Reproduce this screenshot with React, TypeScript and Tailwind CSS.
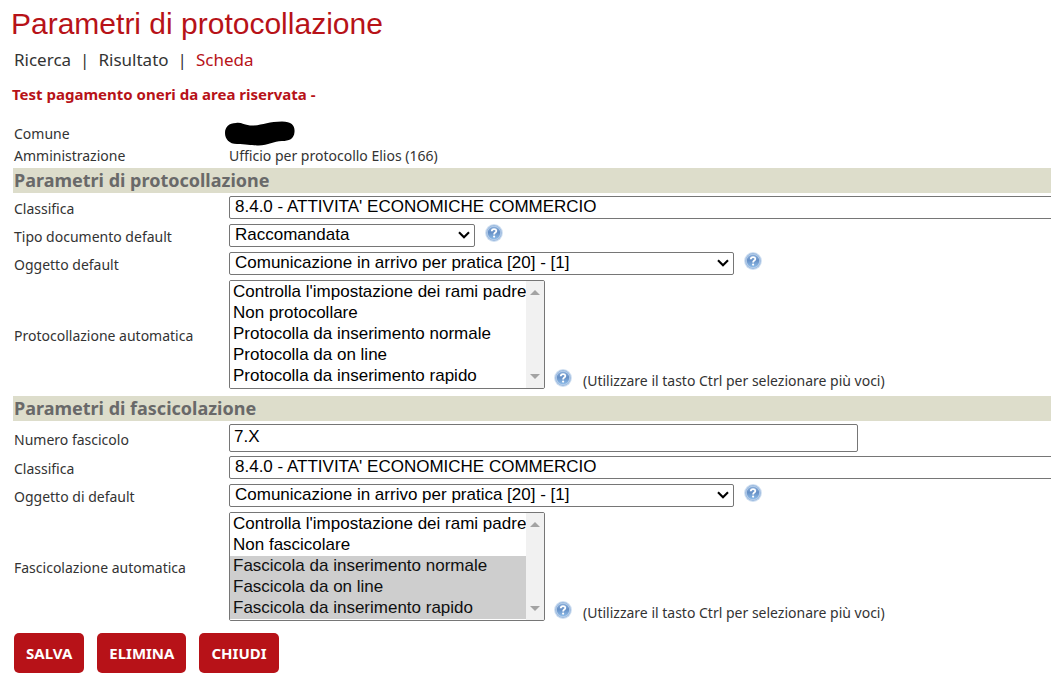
import { useId, type ReactNode } from 'react';

const controlFont = "font-['Liberation_Sans',Arial,sans-serif] text-[17px] text-black";

function Chevron() {
  return (
    <svg
      aria-hidden="true"
      viewBox="0 0 12 8"
      className="pointer-events-none col-start-1 row-start-1 mr-[5px] h-2 w-3 self-center justify-self-end"
    >
      <path d="M1 1.3 L6 6.3 L11 1.3" fill="none" stroke="#000" strokeWidth="2.1" />
    </svg>
  );
}

function HelpIcon() {
  const id = useId();
  return (
    <svg aria-hidden="true" viewBox="0 0 18 18" className="h-[18px] w-[18px]">
      <defs>
        <linearGradient id={id} x1="0" y1="0" x2="0" y2="1">
          <stop offset="0" stopColor="#86abd8" />
          <stop offset="0.45" stopColor="#6690c6" />
          <stop offset="1" stopColor="#8dbbe8" />
        </linearGradient>
      </defs>
      <circle cx="9" cy="9" r="8.9" fill="#cfdff1" />
      <circle cx="9" cy="9" r="7.9" fill="#9dbbe0" />
      <circle cx="9" cy="9" r="6.9" fill="#b9d0ea" />
      <circle cx="9" cy="9" r="6.2" fill={`url(#${id})`} />
      <path
        d="M6.8 7.2 C6.8 4.4 11.3 4.4 11.3 7 C11.3 8.6 9.1 8.6 9.1 10.4"
        fill="none"
        stroke="#fff"
        strokeWidth="1.8"
      />
      <circle cx="9.1" cy="12.6" r="1.1" fill="#fff" />
    </svg>
  );
}

function HelpButton() {
  return (
    <button type="button" aria-label="Aiuto" className="shrink-0 cursor-pointer">
      <HelpIcon />
    </button>
  );
}

function Row({ label, htmlFor, className, children }: {
  label: string;
  htmlFor?: string;
  className: string;
  children: ReactNode;
}) {
  return (
    <div className={`grid grid-cols-[216px_1fr] items-center ${className}`}>
      {htmlFor ? (
        <label htmlFor={htmlFor} className="pt-[3px] pl-px">{label}</label>
      ) : (
        <span className="pl-px">{label}</span>
      )}
      <div className="flex min-w-0">{children}</div>
    </div>
  );
}

function Dropdown({ id, value, width, help = true }: {
  id: string;
  value: string;
  width: string;
  help?: boolean;
}) {
  return (
    <div className="flex items-start gap-[10px]">
      <div className={`grid items-center ${width}`}>
        <select
          id={id}
          className={`col-start-1 row-start-1 h-[23px] w-full appearance-none rounded-[2px] border border-[#767676] bg-white pr-6 pb-px pl-[5px] leading-5 ${controlFont}`}
        >
          <option>{value}</option>
        </select>
        <Chevron />
      </div>
      {help && <HelpButton />}
    </div>
  );
}

function ListBox({ id, options, selected = [] }: {
  id: string;
  options: string[];
  selected?: string[];
}) {
  return (
    <div className="flex items-end">
      <div className="flex h-[109px] w-[316px] overflow-hidden rounded-[2px] border border-[#767676]">
        <select
          id={id}
          multiple
          size={5}
          defaultValue={selected}
          className={`min-w-0 flex-1 overflow-hidden bg-white pt-px ${controlFont}`}
        >
          {options.map((option) => (
            <option key={option} value={option} className="h-[21px] min-h-0 px-[3px] py-0 leading-5">
              {option}
            </option>
          ))}
        </select>
        <div aria-hidden="true" className="flex w-[18px] flex-col items-center justify-between bg-[#f1f1f1] py-[9px]">
          <svg viewBox="0 0 10 5" className="h-[5px] w-[10px]"><path d="M0 5 L5 0 L10 5Z" fill="#a3a3a3" /></svg>
          <svg viewBox="0 0 10 5" className="h-[5px] w-[10px]"><path d="M0 0 L5 5 L10 0Z" fill="#a3a3a3" /></svg>
        </div>
      </div>
      <div className="flex h-5 items-start gap-[11px] pl-[9px]">
        <HelpButton />
        <span className="leading-6">(Utilizzare il tasto Ctrl per selezionare più voci)</span>
      </div>
    </div>
  );
}

function SectionTitle({ children }: { children: ReactNode }) {
  return (
    <h2 className="h-[25px] bg-[#ddddcb] pl-px text-[18px] leading-[25px] font-bold text-[#696969]">
      {children}
    </h2>
  );
}

function ActionButton({ children }: { children: ReactNode }) {
  return (
    <button
      type="button"
      className="h-10 cursor-pointer rounded-[5px] bg-[#b71218] px-3 text-[15px] font-bold text-white"
    >
      {children}
    </button>
  );
}

export default function App() {
  return (
    <main className="min-h-screen overflow-hidden bg-white pl-[13px] font-['Noto_Sans',Tahoma,sans-serif] text-[14px] leading-5 text-[#333]">
      <h1 className="-ml-[2px] pt-1 font-['Liberation_Sans',Arial,sans-serif] text-[30px] leading-10 text-[#b71218]">
        Parametri di protocollazione
      </h1>
      <nav className="mt-1 flex gap-[9px] pl-px text-[17px] leading-6">
        <a href="#ricerca">Ricerca</a>
        <span aria-hidden="true">|</span>
        <a href="#risultato">Risultato</a>
        <span aria-hidden="true">|</span>
        <a href="#scheda" aria-current="page" className="text-[#b71218]">Scheda</a>
      </nav>
      <p className="-ml-px mt-3 text-[15px] leading-5 font-bold text-[#b71218]">
        Test pagamento oneri da area riservata -
      </p>

      <form className="mt-[17px]" onSubmit={(event) => event.preventDefault()}>
        <Row label="Comune" className="h-[23px]">
          <svg aria-hidden="true" viewBox="0 0 72 26" className="-ml-1 h-[26px] w-[72px]">
            <path
              d="M11 2 C16 1 19 4 25 4.500 C36 5 43 .5 57 .5 C67 .5 70 5 69.500 11 C69 18 64 20 57 20 C48 20 43 25 32 24.500 C27 24.500 21 23 12 23 C4 23 0 18 0 12 C0 6 4 2 11 2Z"
              fill="#000"
            />
          </svg>
        </Row>
        <Row label="Amministrazione" className="h-6">
          <span>Ufficio per protocollo Elios (166)</span>
        </Row>

        <SectionTitle>Parametri di protocollazione</SectionTitle>
        <Row label="Classifica" htmlFor="classifica" className="h-7">
          <Dropdown id="classifica" value="8.4.0 - ATTIVITA' ECONOMICHE COMMERCIO" width="w-[100vw]" help={false} />
        </Row>
        <Row label="Tipo documento default" htmlFor="tipo" className="h-7">
          <Dropdown id="tipo" value="Raccomandata" width="w-[246px]" />
        </Row>
        <Row label="Oggetto default" htmlFor="oggetto" className="h-7">
          <Dropdown id="oggetto" value="Comunicazione in arrivo per pratica [20] - [1]" width="w-[505px]" />
        </Row>
        <Row label="Protocollazione automatica" htmlFor="protocollazione" className="h-[115px]">
          <ListBox
            id="protocollazione"
            options={[
              "Controlla l'impostazione dei rami padre",
              'Non protocollare',
              'Protocolla da inserimento normale',
              'Protocolla da on line',
              'Protocolla da inserimento rapido',
            ]}
          />
        </Row>

        <div className="mt-1 mb-[2px]">
          <SectionTitle>Parametri di fascicolazione</SectionTitle>
        </div>
        <Row label="Numero fascicolo" htmlFor="numero" className="h-[30px]">
          <input
            id="numero"
            type="text"
            defaultValue="7.X"
            className={`h-7 w-[629px] rounded-[2px] border border-[#767676] bg-white pb-[2px] pl-1 ${controlFont}`}
          />
        </Row>
        <Row label="Classifica" htmlFor="classifica-fascicolo" className="h-7">
          <Dropdown id="classifica-fascicolo" value="8.4.0 - ATTIVITA' ECONOMICHE COMMERCIO" width="w-[100vw]" help={false} />
        </Row>
        <Row label="Oggetto di default" htmlFor="oggetto-fascicolo" className="h-7">
          <Dropdown id="oggetto-fascicolo" value="Comunicazione in arrivo per pratica [20] - [1]" width="w-[505px]" />
        </Row>
        <Row label="Fascicolazione automatica" htmlFor="fascicolazione" className="h-[115px]">
          <ListBox
            id="fascicolazione"
            options={[
              "Controlla l'impostazione dei rami padre",
              'Non fascicolare',
              'Fascicola da inserimento normale',
              'Fascicola da on line',
              'Fascicola da inserimento rapido',
            ]}
            selected={[
              'Fascicola da inserimento normale',
              'Fascicola da on line',
              'Fascicola da inserimento rapido',
            ]}
          />
        </Row>

        <div className="mt-[9px] flex gap-[13px] pl-px">
          <ActionButton>SALVA</ActionButton>
          <ActionButton>ELIMINA</ActionButton>
          <ActionButton>CHIUDI</ActionButton>
        </div>
      </form>
    </main>
  );
}
